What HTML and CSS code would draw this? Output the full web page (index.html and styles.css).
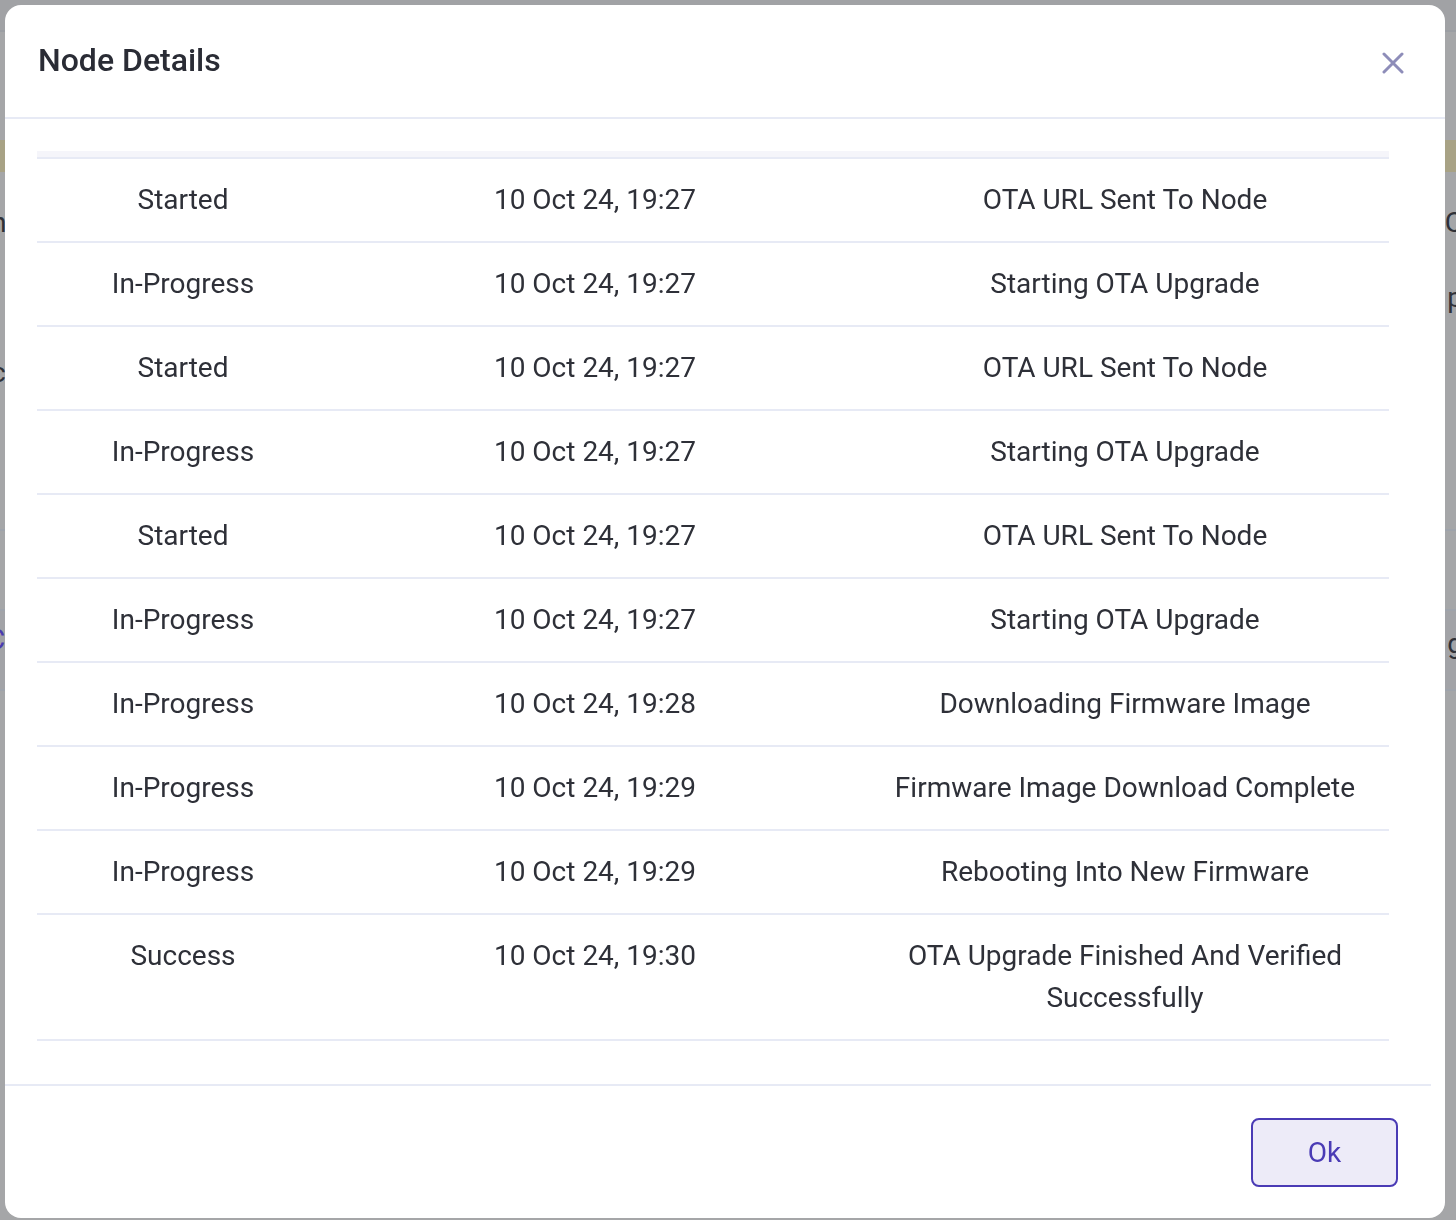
FILE: index.html
```html
<!DOCTYPE html>
<html lang="en">
<head>
<meta charset="UTF-8">
<meta name="viewport" content="width=device-width, initial-scale=1.0">
<title>Node Details</title>
<link rel="stylesheet" href="styles.css">
</head>
<body>

<!-- page behind the dialog -->
<div class="page">
    <div class="topbar"></div>
    <div class="page-gap"></div>
    <div class="notice"></div>
    <div class="page-row row-a"><span class="frag frag-l">n</span><span class="frag frag-r">C</span></div>
    <div class="page-row row-b"><span class="frag frag-r">p</span></div>
    <div class="page-row row-c"><span class="frag frag-l">c</span></div>
    <div class="page-row row-d"><span class="frag frag-l">:</span></div>
    <div class="page-line"></div>
    <div class="page-line"><span class="frag frag-link">C</span><span class="frag frag-r frag-low">g</span></div>
    <div class="page-line"></div>
</div>

<div class="overlay">
    <div class="modal">
        <div class="modal-header">
            <h2>Node Details</h2>
            <button class="close-btn" aria-label="Close">
                <svg width="22" height="22" viewBox="0 0 22 22">
                    <path d="M2 2 L20 20 M20 2 L2 20" stroke="#8e8db9" stroke-width="3" stroke-linecap="round"/>
                </svg>
            </button>
        </div>

        <div class="modal-body">
            <div class="table-wrap">
                <table>
                    <thead>
                        <tr>
                            <th class="col-status"></th>
                            <th class="col-time"></th>
                            <th class="col-info"></th>
                        </tr>
                    </thead>
                    <tbody id="otaLog">
                        <!-- rows filled in by script -->
                    </tbody>
                </table>
            </div>
        </div>

        <div class="modal-footer">
            <button class="ok-btn">Ok</button>
        </div>
    </div>
</div>

<script>
    const otaEvents = [
        { status: 'Started', time: '10 Oct 24, 19:27', info: 'OTA URL Sent To Node' },
        { status: 'In-Progress', time: '10 Oct 24, 19:27', info: 'Starting OTA Upgrade' },
        { status: 'Started', time: '10 Oct 24, 19:27', info: 'OTA URL Sent To Node' },
        { status: 'In-Progress', time: '10 Oct 24, 19:27', info: 'Starting OTA Upgrade' },
        { status: 'Started', time: '10 Oct 24, 19:27', info: 'OTA URL Sent To Node' },
        { status: 'In-Progress', time: '10 Oct 24, 19:27', info: 'Starting OTA Upgrade' },
        { status: 'In-Progress', time: '10 Oct 24, 19:28', info: 'Downloading Firmware Image' },
        { status: 'In-Progress', time: '10 Oct 24, 19:29', info: 'Firmware Image Download Complete' },
        { status: 'In-Progress', time: '10 Oct 24, 19:29', info: 'Rebooting Into New Firmware' },
        { status: 'Success', time: '10 Oct 24, 19:30', info: 'OTA Upgrade Finished And Verified Successfully' }
    ];

    const tableBody = document.getElementById('otaLog');
    otaEvents.forEach(ev => {
        tableBody.innerHTML += `<tr>
                                    <td>${ev.status}</td>
                                    <td>${ev.time}</td>
                                    <td>${ev.info}</td>
                                </tr>`;
    });
</script>

</body>
</html>
```

FILE: styles.css
```css
body {
    margin: 0;
    padding: 0;
    font-family: Roboto, "Liberation Sans", Arial, sans-serif;
    background-color: #a5a6a8;
    color: #2e3038;
}

/* dimmed page underneath */
.page {
    height: 1220px;
    overflow: hidden;
}

.topbar {
    height: 30px;
    background-color: #a1a2a5;
    border-bottom: 2px solid #9b9ea3;
}

.page-gap {
    height: 108px;
}

.notice {
    height: 32px;
    background-color: #a8a285;
}

.page-row {
    position: relative;
    height: 72px;
}

.row-a { height: 75px; }
.row-b { height: 75px; }
.row-c { height: 120px; }
.row-d { height: 87px; }

.page-line {
    position: relative;
    height: 78px;
    border-top: 2px solid #9ea3ab;
}

.page-line:nth-of-type(odd) {
    background-color: #a2a3a7;
}

.frag {
    position: absolute;
    font-size: 28px;
    color: #2f3138;
}

.frag-l { left: -9px; top: 34px; }
.frag-r { right: -7px; top: 34px; }
.frag-low { top: 16px; }
.frag-link { left: -13px; top: 12px; color: #4a3bb0; }

/* dialog */
.overlay {
    position: fixed;
    inset: 0;
}

.modal {
    position: absolute;
    top: 5px;
    left: 5px;
    width: 1440px;
    height: 1213px;
    background-color: #fff;
    border-radius: 16px;
    display: flex;
    flex-direction: column;
    overflow: hidden;
}

.modal-header {
    height: 112px;
    padding: 0 41px 0 33px;
    display: flex;
    align-items: center;
    justify-content: space-between;
    border-bottom: 2px solid #e7eaf5;
    box-sizing: content-box;
}

.modal-header h2 {
    margin: 0;
    margin-top: -2px;
    font-size: 32px;
    font-weight: 500;
    color: #2a2c35;
}

.close-btn {
    background: none;
    border: none;
    padding: 0;
    width: 22px;
    height: 22px;
    cursor: pointer;
    margin-top: 4px;
}

.modal-body {
    flex: 1;
    padding: 32px 46px 0 32px;
}

.table-wrap {
    width: 1352px;
}

table {
    width: 100%;
    border-collapse: collapse;
    table-layout: fixed;
}

thead th {
    height: 6px;
    padding: 0;
    background-color: #f5f5fa;
    border-bottom: 2px solid #e7eaf5;
}

.col-status { width: 292px; }
.col-time { width: 532px; }

td {
    padding: 20px 12px;
    font-size: 28px;
    line-height: 42px;
    text-align: center;
    vertical-align: top;
    border-bottom: 2px solid #e7eaf5;
}

td:last-child {
    padding-left: 26px;
    padding-right: 26px;
}

.modal-footer {
    margin-right: 14px;
    padding: 32px 33px 31px 0;
    border-top: 2px solid #e7eaf5;
    display: flex;
    justify-content: flex-end;
}

.ok-btn {
    width: 147px;
    height: 69px;
    font-family: inherit;
    font-size: 28px;
    color: #4a3bb5;
    background-color: #edebf8;
    border: 2px solid #4a3bb5;
    border-radius: 8px;
    cursor: pointer;
}
```
